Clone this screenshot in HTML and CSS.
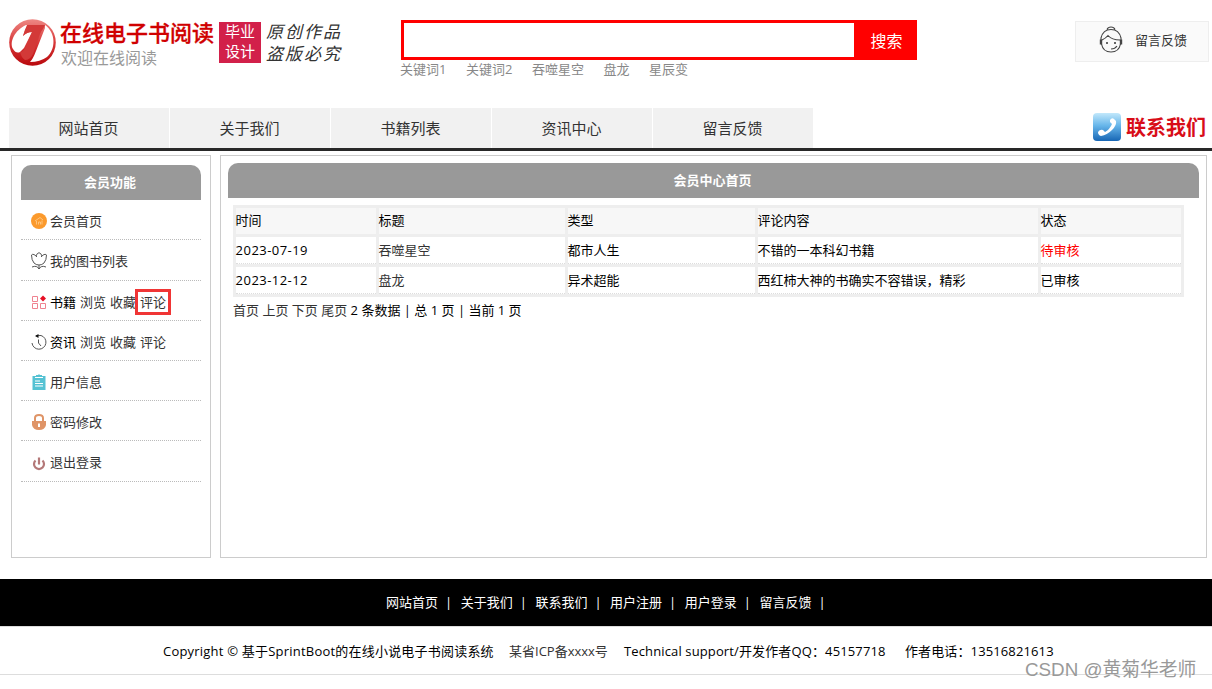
FILE: index.html
```html
<!DOCTYPE html>
<html lang="zh-CN">
<head>
<meta charset="utf-8">
<title>在线电子书阅读</title>
<link rel="stylesheet" href="styles.css">
</head>
<body>
<header class="header">
  <div class="brand">
    <svg class="brand-mark" width="48" height="48" viewBox="0 0 48 48">
      <defs><linearGradient id="red" x1="0" y1="0" x2="0" y2="1"><stop offset="0" stop-color="#ee8884"/><stop offset=".5" stop-color="#d8393a"/><stop offset="1" stop-color="#b9080c"/></linearGradient></defs>
      <circle cx="24.500" cy="24.500" r="23.300" fill="url(#red)"/>
      <path d="M18 7C7 12 1 24 5 31Q8 36 12 34L16 30L24 14Q19 14 15 18Q17 11 20 7Z" fill="#fff"/>
      <path d="M37 7C48 15 48 31 39 39Q32 44 22 44Q25 41 28 33L37 10Z" fill="#fff"/>
      <path d="M19 7H37L35 11Q33 13 32 16L25 36Q22 42 17 42Q13 39 12 34Q15 34 17 30L24 14Q19 14 15 18Q17 11 19 7Z" fill="#d33938"/>
    </svg>
    <div class="brand-text"><div class="brand-name">在线电子书阅读</div><div class="brand-sub">欢迎在线阅读</div></div>
    <div class="stamp"><span>毕业</span><span>设计</span></div>
    <div class="notice"><span>原创作品</span><span>盗版必究</span></div>
  </div>
  <div class="search">
    <div class="search-bar"><input class="search-input" type="text" aria-label="搜索"><button class="search-btn">搜索</button></div>
    <div class="keywords"><a>关键词1</a><a>关键词2</a><a>吞噬星空</a><a>盘龙</a><a>星辰变</a></div>
  </div>
  <a class="feedback">
    <svg width="26" height="28" viewBox="0 0 26 28" fill="none" stroke="#444" stroke-width="1.1">
      <path d="M9 3.500Q10 1 13 1T17 3.500M3 14V12Q5 3.500 13 3.500T23 12V14M3.500 18Q5 26 13 26T22.500 18M4 14Q8 12 10 9.500Q14 14 22 14M13 23Q17 23 19 20"/>
      <path d="M3 13.500V18.500M23 13.500V18.500" stroke-width="2.400"/><circle cx="9" cy="17" r="1" fill="#333" stroke="none"/><circle cx="17" cy="17" r="1" fill="#333" stroke="none"/>
    </svg>
    <span>留言反馈</span>
  </a>
</header>
<nav class="nav">
  <a class="nav-item">网站首页</a><a class="nav-item">关于我们</a><a class="nav-item">书籍列表</a><a class="nav-item">资讯中心</a><a class="nav-item">留言反馈</a>
  <div class="contact">
    <svg width="30" height="30" viewBox="0 0 30 30">
      <defs><linearGradient id="blue" x1="0" y1="0" x2="0" y2="1"><stop offset="0" stop-color="#c2e8fb"/><stop offset=".45" stop-color="#67b6ea"/><stop offset="1" stop-color="#1766b5"/></linearGradient></defs>
      <rect x="1" y="1" width="28" height="28" rx="4" fill="url(#blue)"/>
      <path d="M18 8Q20 5 22 7L24 9Q25 13 20 18T9 24Q6 23 6 20Q8 17 11 18L13 20Q18 17 20 12L18 10Z" fill="#fff"/>
    </svg>
    <span>联系我们</span>
  </div>
</nav>
<div class="content">
  <aside class="sidebar">
    <h2 class="panel-title">会员功能</h2>
    <ul class="menu">
      <li><svg class="icon" viewBox="0 0 16 16"><circle cx="8" cy="8" r="8" fill="#fb9a2d"/><path d="M4 8L9 4.500L12 7M5.500 8V11.500M7.500 11.500V9H9.500V11.500M11 7.500V11.500" fill="none" stroke="#ffc885" stroke-width=".9"/></svg><a>会员首页</a></li>
      <li class="tall"><svg class="icon icon-wide" viewBox="0 0 16 18" fill="none" stroke="#444" stroke-width=".9"><path d="M5 4Q6 1 8 .7Q10 1 11 4L13 2.500Q15.500 2 15.500 3Q15.500 8 13 11Q11 13 8 13T3 11Q.5 8 .5 3Q1 2 3 2.500L5 4L6 5M11 4L10 5M8 13V17M1 15Q6 13 8 17Q10 13 15 15"/></svg><a>我的图书列表</a></li>
      <li><svg class="icon" viewBox="0 0 16 16" fill="none" stroke="#ef8290"><path d="M1.500 2.500H6.500V7.500H1.500ZM1.500 9.500H6.500V14.500H1.500ZM9.500 9.500H14.500V14.500H9.500Z"/><path d="M12 1.500L15 4.500L12 7.500L9 4.500Z" fill="#e60f25" stroke="none"/></svg><b>书籍</b><a>浏览</a><a>收藏</a><a class="marked">评论</a></li>
      <li><svg class="icon" viewBox="0 0 16 16" fill="none" stroke="#555"><path d="M5 1.700L10 1.500A7 7 0 1 1 1 9M7.500 5.500V9L10 12"/><path d="M4 2L7.500 0V4Z" fill="#111" stroke="none"/></svg><b>资讯</b><a>浏览</a><a>收藏</a><a>评论</a></li>
      <li><svg class="icon" viewBox="0 0 16 16"><path d="M1.500 2H5V1H7Q8 -.5 9 1H11V2H14.500V16H1.500Z" fill="#55c2d3"/><path d="M4 3.500H12M4 7H9M4 9.500H12M4 12H12" stroke="#fff"/></svg><a>用户信息</a></li>
      <li><svg class="icon" viewBox="0 0 16 16"><path d="M4 7V4Q4 1 8 1T12 4V7" fill="none" stroke="#df9467" stroke-width="2"/><path d="M1 7H15V11Q14 16 8 16T1 11Z" fill="#df9467"/><path d="M8 9.500V13" stroke="#fff" stroke-width="2"/></svg><a>密码修改</a></li>
      <li class="tall"><svg class="icon icon-low" viewBox="0 0 16 16" fill="none" stroke="#b47878" stroke-width="2.200"><path d="M4.500 4.500A5 5 0 1 0 11.500 4.500M8 1.500V8.500"/></svg><a>退出登录</a></li>
    </ul>
  </aside>
  <main class="main">
    <h2 class="panel-title">会员中心首页</h2>
    <div class="table">
      <div class="cell head">时间</div><div class="cell head">标题</div><div class="cell head">类型</div><div class="cell head">评论内容</div><div class="cell head">状态</div>
      <div class="cell date">2023-07-19</div><div class="cell link">吞噬星空</div><div class="cell">都市人生</div><div class="cell">不错的一本科幻书籍</div><div class="cell pending">待审核</div>
      <div class="cell date">2023-12-12</div><div class="cell link">盘龙</div><div class="cell">异术超能</div><div class="cell">西红柿大神的书确实不容错误，精彩</div><div class="cell">已审核</div>
    </div>
    <div class="pager"><a>首页</a> <a>上页</a> <a>下页</a> <a>尾页</a> 2 条数据 | 总 1 页 | 当前 1 页</div>
  </main>
</div>
<footer>
  <div class="footer-nav"><a>网站首页</a><a>关于我们</a><a>联系我们</a><a>用户注册</a><a>用户登录</a><a>留言反馈</a></div>
  <div class="copyright"><span class="c-name">Copyright © 基于SprintBoot的在线小说电子书阅读系统</span><span class="c-icp">某省ICP备xxxx号</span><span class="c-qq">Technical support/开发作者QQ：45157718</span><span class="c-tel">作者电话：13516821613</span></div>
</footer>
<div class="watermark">CSDN @黄菊华老师</div>
</body>
</html>
```
FILE: styles.css
```css
* { box-sizing: border-box; }
body { margin: 0; height: 689px; overflow: hidden; background: #fff; color: #000; font: 13px/20px "Open Sans", "Noto Sans CJK SC", sans-serif; white-space: nowrap; }
a { color: #333; }
.header { display: flex; height: 108px; }
.brand { display: flex; width: 400px; padding: 18px 0 0 8px; }
.brand-mark { flex: none; }
.brand-text { flex: none; width: 163px; padding-left: 4px; }
.brand-name { height: 28px; color: #d00000; font-size: 22px; font-weight: 500; line-height: 28px; -webkit-text-stroke: .3px #d00000; }
.brand-sub { padding-left: 1px; color: #999; font-size: 16px; line-height: 25px; }
.stamp { display: flex; flex: none; flex-direction: column; align-items: center; width: 42px; height: 41px; margin-top: 4px; background: #d2204a; color: #fff; font-family: "Noto Sans CJK SC", sans-serif; font-size: 15px; line-height: 20px; }
.stamp span { margin-top: -1px; height: 21px; }
.notice { display: flex; flex-direction: column; padding: 2px 0 0 5px; color: #333; font-family: "Noto Sans CJK SC", sans-serif; font-size: 17px; font-style: italic; line-height: 22px; letter-spacing: 2px; }
.notice span { height: 22px; }
.search { width: 517px; padding: 20px 0 0 1px; }
.search-bar { display: flex; height: 40px; }
.search-input { width: 453px; border: 3px solid #f00; border-right: 0; padding: 0 8px; outline: 0; }
.search-btn { flex: 1; border: 0; padding: 0 0 1px 2px; background: #f00; color: #fff; font: 16px "Noto Sans CJK SC", sans-serif; }
.keywords { display: flex; gap: 19.500px; margin: -1px 0 0 -1px; line-height: 20px; }
.keywords a { color: #888; }
.feedback { display: flex; align-items: center; width: 134px; height: 41px; margin: 21px 0 0 158px; padding-left: 22px; gap: 11px; border: 1px solid #eee; background: #fafafa; }
.feedback svg { margin-top: -3px; }
.feedback span { margin-top: -4px; }
.nav { display: flex; height: 43px; padding-left: 9px; border-bottom: 3px solid #282828; }
.nav-item { width: 161px; padding-right: 1px; border-right: 1px solid #fff; background: #f1f1f1; font-size: 15px; line-height: 40px; text-align: center; }
.contact { display: flex; align-items: center; height: 38px; margin-left: auto; padding-right: 6px; gap: 4px; color: #d80d18; font-size: 20px; font-weight: 700; }
.contact span { margin-top: 2px; }
.content { display: flex; gap: 9px; height: 428px; padding: 4px 5px 21px 11px; }
.sidebar { width: 200px; padding: 9px; border: 1px solid #ccc; }
.panel-title { height: 35px; margin: 0; padding-right: 2px; border-radius: 10px 10px 0 0; background: #999; color: #fff; font-size: 13px; line-height: 35px; text-align: center; }
.menu { margin: 0; padding: 0; list-style: none; }
.menu li { display: flex; align-items: center; gap: 4px; height: 40px; padding: 2px 0 0 10px; border-bottom: 1px dotted #bbb; }
.menu .tall { height: 41px; padding-top: 1px; }
.menu b { font-weight: 400; }
.icon { width: 16px; height: 16px; flex: none; margin-right: -1px; }
.icon-wide { height: 18px; }
.icon-low { margin-top: 4px; }
.marked { outline: 3px solid #f03535; outline-offset: 2px; line-height: 16px; }
.main { flex: 1; padding: 7px; border: 1px solid #ccc; }
.table { display: grid; grid-template-columns: 140px 186px 187px 280px 140px; grid-template-rows: 26px 27px 27px; gap: 3px; width: 951px; margin: 7px 0 0 5px; padding: 3px; background: #eee; }
.cell { border-bottom: 1px dotted #ddd; background: #fff; line-height: 26px; text-indent: -.4px; }
.head { border-bottom: 0; background: #f7f7f7; line-height: 25px; }
.date { letter-spacing: .45px; }
.link { color: #333; }
.pending { color: #f00; }
.pager { padding: 3px 0 0 5px; }
.footer-nav { display: flex; height: 47px; padding-left: 386px; background: #000; line-height: 47px; }
.footer-nav a { width: 74.700px; color: #fff; }
.footer-nav a::after { content: "|"; margin-left: 7px; }
.copyright { display: flex; height: 49px; padding-left: 163px; border-top: 1px solid #ddd; border-bottom: 1px solid #ddd; line-height: 48px; }
.c-name { width: 346px; letter-spacing: .21px; }
.c-icp { width: 115px; color: #333; }
.c-qq { width: 281px; letter-spacing: .13px; }
.c-tel { letter-spacing: .12px; }
.watermark { position: absolute; left: 1025px; top: 657px; color: #999; font: 18.800px/26px "Liberation Sans", "Noto Sans CJK SC", sans-serif; }
```
